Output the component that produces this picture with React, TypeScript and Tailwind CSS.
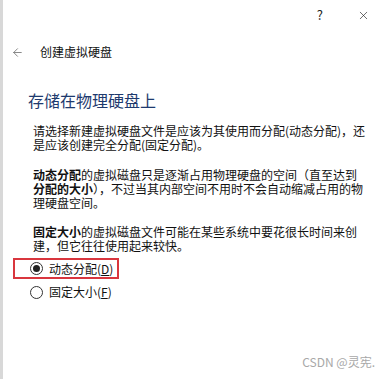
import { ArrowLeft, X } from "lucide-react";

const cjk = { fontFamily: '"Noto Sans CJK SC", "Noto Sans", sans-serif' };

const Radio = ({ checked, label, hotkey, h }: { checked: boolean; label: string; hotkey: string; h: string }) => (
  <div className={`flex items-center ${h}`}>
    <span className="w-[13px] h-[13px] rounded-full border border-[#333] flex items-center justify-center">
      {checked && <span className="w-[7px] h-[7px] rounded-full bg-[#222]" />}
    </span>
    <span className="ml-[6px] text-[12px] leading-[16px] text-[#111]">
      {label}(<span className="underline">{hotkey}</span>)
    </span>
  </div>
);

export default function App() {
  return (
    <div className="w-[389px] h-[379px] bg-white flex relative overflow-hidden" style={cjk}>
      {/* sliver of the window behind */}
      <div className="w-[3px] bg-[#d8d8d8]" />
      <div className="flex-1 flex flex-col">
        <div className="h-[30px] flex items-center justify-end pr-[19px] text-[#222]">
          <span className="text-[13px] mr-[34px]">?</span>
          <X size={13} strokeWidth={1.2} />
        </div>

        <div className="flex items-center h-[16px] mt-[14px] pl-[8px]">
          <ArrowLeft size={13} strokeWidth={1.6} className="text-[#777]" />
          <span className="ml-[16px] text-[12px] text-[#111]">创建虚拟硬盘</span>
        </div>

        <h1 className="mt-[30px] pl-[25px] text-[16px] leading-[20px] text-[#1e3a6e]">存储在物理硬盘上</h1>

        <div className="pl-[30px] text-[12px] leading-[14px] text-[#111]">
          <p className="mt-[14px]">
            请选择新建虚拟硬盘文件是应该为其使用而分配(动态分配)，还
            <br />
            是应该创建完全分配(固定分配)。
          </p>
          <p className="mt-[16px]">
            <b>动态分配</b>的虚拟磁盘只是逐渐占用物理硬盘的空间（直至达到
            <br />
            <b>分配的大小</b>），不过当其内部空间不用时不会自动缩减占用的物
            <br />
            理硬盘空间。
          </p>
          <p className="mt-[15px]">
            <b>固定大小</b>的虚拟磁盘文件可能在某些系统中要花很长时间来创
            <br />
            建，但它往往使用起来较快。
          </p>
        </div>

        <div className="mt-[5px] pl-[27px] flex flex-col items-start">
          <div className="-ml-[17px] pl-[15px] pr-[4px] border-2 border-[#d9363e]">
            <Radio checked label="动态分配" hotkey="D" h="h-[17px]" />
          </div>
          <div className="mt-[2px]">
            <Radio checked={false} label="固定大小" hotkey="F" h="h-[22px]" />
          </div>
        </div>
      </div>
      <span className="absolute right-[14px] bottom-[8px] text-[12px] text-[#a8a8a8]">CSDN @灵宪.</span>
    </div>
  );
}
